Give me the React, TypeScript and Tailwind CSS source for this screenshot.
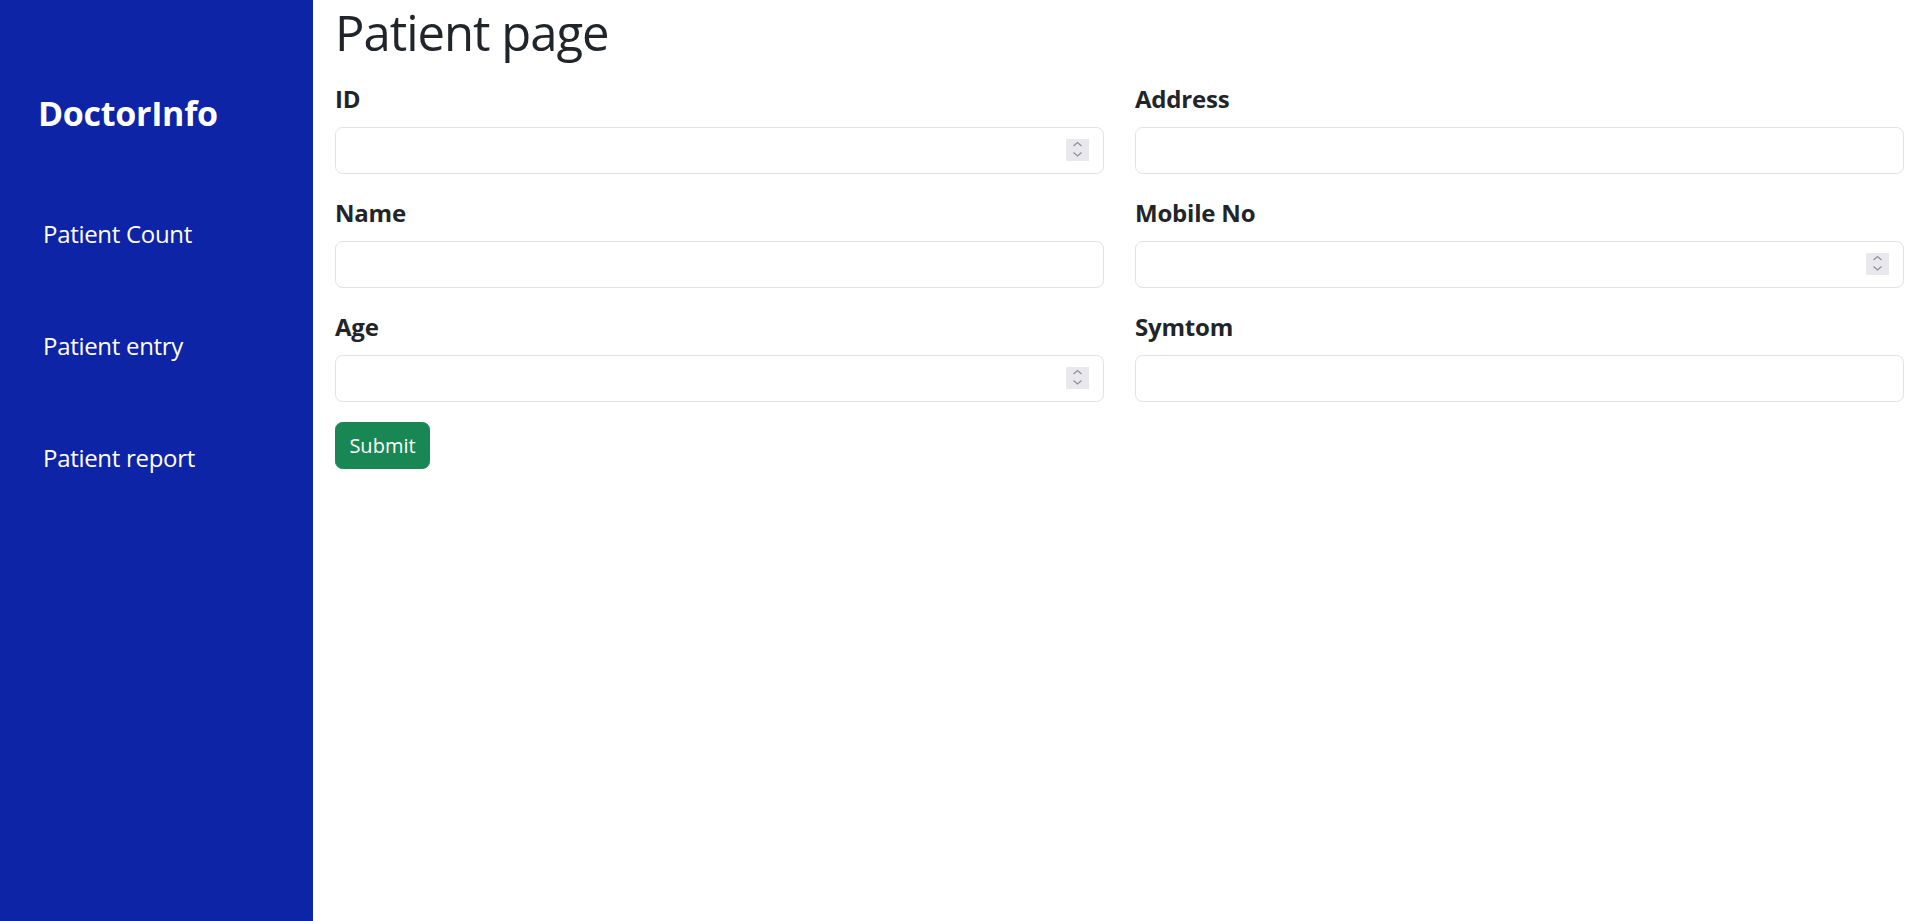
import React from "react";

const font = { fontFamily: '"Open Sans", "Noto Sans", sans-serif' };

function Spinner() {
  return (
    <span className="pointer-events-none absolute right-[15px] top-[12px] h-[22px] w-[23px] bg-[#e9e9ed]">
      <svg width="23" height="22" viewBox="0 0 23 22" fill="none" stroke="#8f8f9d" strokeWidth="1.2">
        <path d="M7.5 7 L11.5 3.5 L15.5 7" />
        <path d="M7.5 13.5 L11.5 17 L15.5 13.5" />
      </svg>
    </span>
  );
}

function Field({ label, spin }: { label: string; spin?: boolean }) {
  return (
    <div className="flex flex-col">
      <label className="mb-[13px] h-[30px] text-[24px] font-bold leading-[30px] tracking-[-0.2px] text-[#212529]">{label}</label>
      <div className="relative">
        <input
          type="text"
          className="block h-[47px] w-full rounded-[7.5px] border border-[#dee2e6] bg-white px-[15px] text-[20px] outline-none"
        />
        {spin && <Spinner />}
      </div>
    </div>
  );
}

export default function App() {
  return (
    <div className="flex min-h-screen w-full bg-white" style={font}>
      <div className="flex w-[313px] shrink-0 flex-col bg-[#0e24a6] pl-[38px] pr-[20px] pt-[93px] text-white">
        <h2 className="text-[34px] font-bold leading-[41px] tracking-[-0.3px]">DoctorInfo</h2>
        <div className="mt-[85px] flex flex-col gap-[82px] pl-[5px]">
          <a className="h-[30px] text-[24px] leading-[30px] tracking-[-0.3px]">Patient Count</a>
          <a className="h-[30px] text-[24px] leading-[30px] tracking-[-0.3px]">Patient entry</a>
          <a className="h-[30px] text-[24px] leading-[30px] tracking-[-0.3px]">Patient report</a>
        </div>
      </div>
      <div className="flex-1 pl-[22px] pr-[13px] pt-[2px]">
        <h1 className="text-[49px] font-normal leading-[60px] tracking-[-1px] text-[#212529]">Patient page</h1>
        <div className="mt-[22px] grid grid-cols-2 gap-x-[31px] gap-y-[24px]">
          <Field label="ID" spin />
          <Field label="Address" />
          <Field label="Name" />
          <Field label="Mobile No" spin />
          <Field label="Age" spin />
          <Field label="Symtom" />
        </div>
        <button className="mt-[20px] h-[47px] w-[95px] rounded-[7.5px] border border-[#198754] bg-[#198754] text-[20px] text-white">
          Submit
        </button>
      </div>
    </div>
  );
}
